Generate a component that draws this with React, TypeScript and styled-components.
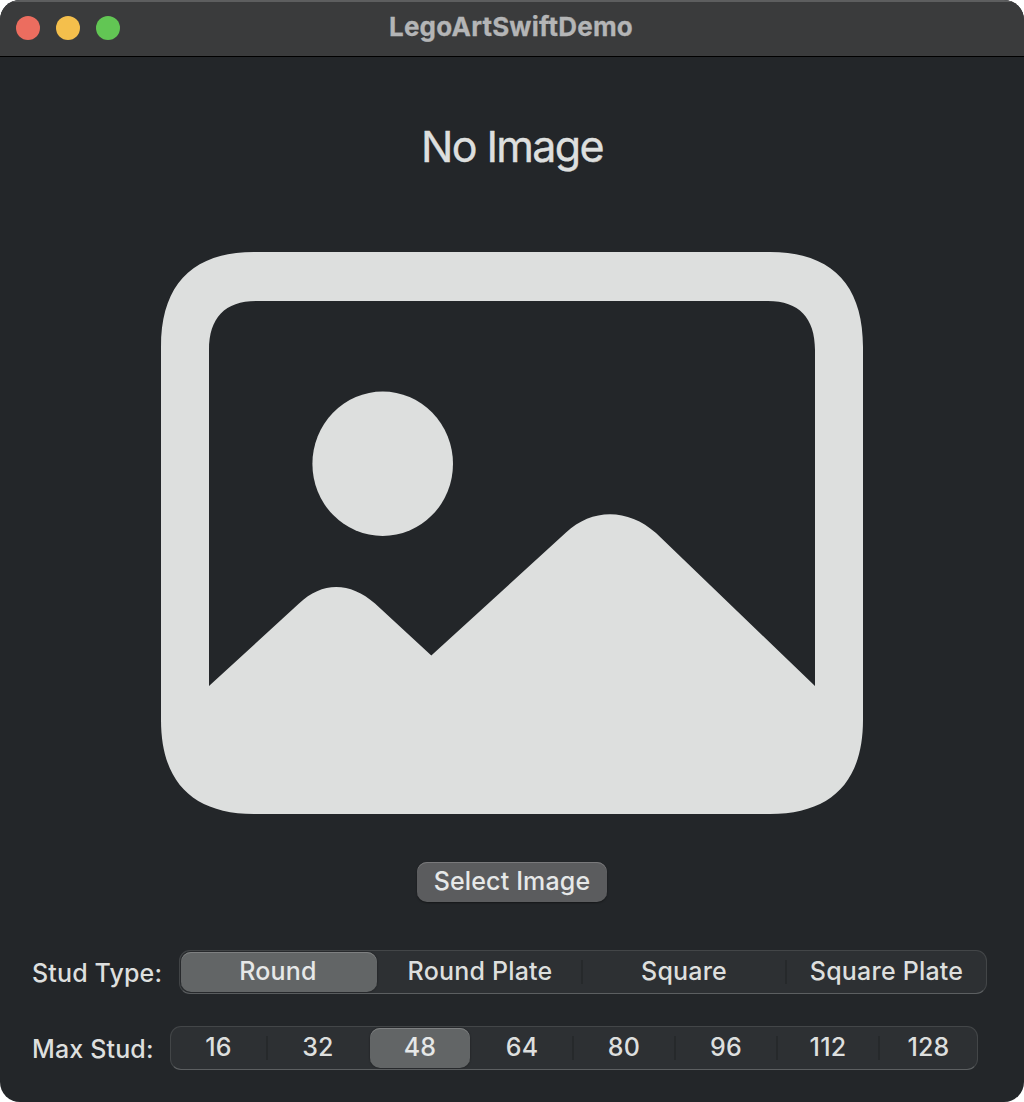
import React from "react";
import styled, { createGlobalStyle } from "styled-components";

const GlobalStyle = createGlobalStyle`
  *, *::before, *::after { box-sizing: border-box; }
  body { margin: 0; background: #fff; }
`;

const Window = styled.div`
  display: flex;
  flex-direction: column;
  width: 1024px;
  height: 1102px;
  overflow: hidden;
  border-radius: 20px;
  background: #232629;
  color: #dddfde;
  font-family: Inter, "Liberation Sans", sans-serif;
`;

const TitleBar = styled.header`
  display: grid;
  grid-template-columns: 1fr auto 1fr;
  align-items: center;
  flex: none;
  height: 57px;
  padding: 0 16px 2px;
  background: #3a3b3c;
  border-top: 2px solid #5d5e5f;
  border-bottom: 1px solid #000;
`;

const TrafficLights = styled.div`
  display: flex;
  gap: 16px;
`;

const Light = styled.span<{ $color: string }>`
  width: 24px;
  height: 24px;
  border-radius: 50%;
  background: ${(p) => p.$color};
`;

const Title = styled.h1`
  margin: 0;
  padding: 0 2px 2px 0;
  font-size: 26px;
  line-height: 30px;
  font-weight: 700;
  letter-spacing: 0.2px;
  -webkit-text-stroke: 0.3px currentColor;
  color: #b4b5b6;
`;

const Content = styled.main`
  display: flex;
  flex-direction: column;
  align-items: center;
  flex: 1;
  padding-top: 62px;
`;

const Message = styled.p`
  margin: 0 0 79px;
  font-size: 43px;
  line-height: 54px;
  letter-spacing: -1.65px;
  -webkit-text-stroke: 0.4px currentColor;
`;

const Photo = styled.svg`
  display: block;
  flex: none;
  width: 702px;
  height: 562px;
  fill: #dddfde;
`;

const SelectButton = styled.button`
  width: 190px;
  height: 40px;
  margin: 48px 0;
  padding: 0 0 2px;
  border: 0;
  border-radius: 10px;
  background: #5b5c5e;
  box-shadow: inset 0 1px 0 #79797b, 0 1px 2px rgba(0, 0, 0, 0.4);
  color: #e6e8e8;
  font: 500 25px/36px Inter, "Liberation Sans", sans-serif;
  letter-spacing: 0.15px;
`;

const Field = styled.div`
  display: flex;
  align-items: center;
  align-self: stretch;
  height: 44px;
  margin-bottom: 32px;
  padding-left: 32px;
`;

const Label = styled.span<{ $width: number }>`
  flex: none;
  width: ${(p) => p.$width}px;
  padding-top: 2px;
  font-size: 25px;
  font-weight: 500;
  line-height: 30px;
  letter-spacing: 0.15px;
  white-space: nowrap;
`;

const Segmented = styled.div<{ $columns: string }>`
  display: grid;
  grid-template-columns: ${(p) => p.$columns};
  column-gap: 2px;
  width: 808px;
  height: 44px;
  border: 1px solid #434648;
  border-bottom-color: #5c5f61;
  border-radius: 11px;
  background: #2d3033;
`;

const Segment = styled.button<{ $divided: boolean }>`
  position: relative;
  display: flex;
  align-items: center;
  justify-content: center;
  height: 42px;
  padding: 0 0 2px;
  border: 0;
  background: none;
  color: #dddfde;
  font: 500 25px/30px Inter, "Liberation Sans", sans-serif;
  letter-spacing: 0.2px;
  white-space: nowrap;

  &::after {
    content: "";
    display: ${(p) => (p.$divided ? "block" : "none")};
    position: absolute;
    top: 9px;
    right: -2px;
    width: 2px;
    height: 24px;
    background: #26292b;
  }

  &[aria-checked="true"] {
    height: 40px;
    margin-top: 1px;
    padding-bottom: 2px;
    border-radius: 10px;
    background: #626566;
    box-shadow: inset 0 1px 0 #7e8081, 0 0 2px rgba(0, 0, 0, 0.5);
    color: #e6e8e8;
  }

  &[aria-checked="true"]:first-child {
    margin-left: 1px;
    padding-right: 2px;
  }
`;

type PickerProps = {
  label: string;
  labelWidth: number;
  columns: string;
  options: string[];
  initial: number;
};

function Picker({ label, labelWidth, columns, options, initial }: PickerProps) {
  const [selected, setSelected] = React.useState(initial);
  return (
    <Field>
      <Label $width={labelWidth}>{label}</Label>
      <Segmented role="radiogroup" aria-label={label} $columns={columns}>
        {options.map((option, i) => (
          <Segment
            key={option}
            role="radio"
            aria-checked={i === selected}
            $divided={i < options.length - 1 && i !== selected && i + 1 !== selected}
            onClick={() => setSelected(i)}
          >
            {option}
          </Segment>
        ))}
      </Segmented>
    </Field>
  );
}

const studTypes = ["Round", "Round Plate", "Square", "Square Plate"];
const studCounts = ["16", "32", "48", "64", "80", "96", "112", "128"];

export default function App() {
  return (
    <>
      <GlobalStyle />
      <Window>
        <TitleBar>
          <TrafficLights>
            <Light $color="#ec6d5f" />
            <Light $color="#f4bf4c" />
            <Light $color="#62c654" />
          </TrafficLights>
          <Title>LegoArtSwiftDemo</Title>
        </TitleBar>
        <Content>
          <Message>No Image</Message>
          <Photo viewBox="161 252 702 562" aria-hidden="true">
            <path
              fillRule="evenodd"
              d="M254 252H770C831 252 863 284 863 347V720C863 782 831 814 770 814H254C193 814 161 782 161 720V347C161 284 193 252 254 252Z
                 M256 301C225 301 209 318 209 350V686L299 603.5C322 581.5 350 581.5 375 603.5L431.3 655.5L566 532.5C592 508 628 508 656 533L815 686V350C815 318 799 301 768 301Z"
            />
            <ellipse cx="382.7" cy="463.8" rx="70.3" ry="72.2" />
          </Photo>
          <SelectButton>Select Image</SelectButton>
          <Picker label="Stud Type:" labelWidth={147} columns="197px 202px 202px 199px" options={studTypes} initial={0} />
          <Picker label="Max Stud:" labelWidth={138} columns="95px repeat(6, 100px) 97px" options={studCounts} initial={2} />
        </Content>
      </Window>
    </>
  );
}
